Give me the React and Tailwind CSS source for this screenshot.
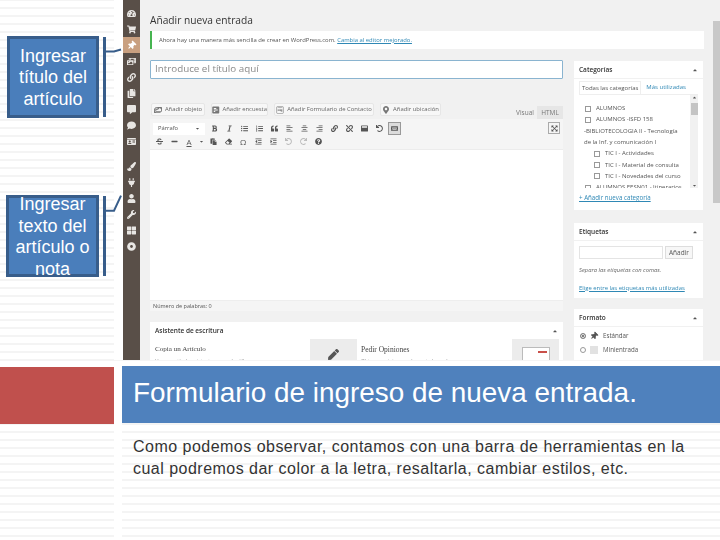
import React from "react";
import {
  FaTachometerAlt, FaShoppingCart, FaThumbtack, FaPhotoVideo, FaLink, FaCopy, FaCommentAlt, FaComment,
  FaIdCard, FaPaintBrush, FaPlug, FaUser, FaWrench, FaThLarge, FaDotCircle, FaBold, FaItalic, FaListUl,
  FaListOl, FaQuoteLeft, FaAlignLeft, FaAlignCenter, FaAlignRight, FaUnlink, FaWindowMaximize, FaUndo,
  FaKeyboard, FaStrikethrough, FaMinus, FaPaste, FaEraser, FaIndent, FaOutdent, FaRedo, FaQuestionCircle,
  FaCaretDown, FaCaretUp, FaExpandArrowsAlt, FaImages, FaPollH, FaWpforms, FaMapMarkerAlt, FaPen,
} from "react-icons/fa";

const menuTop = [FaTachometerAlt, FaShoppingCart, FaThumbtack, FaPhotoVideo, FaLink, FaCopy, FaCommentAlt, FaComment, FaIdCard];
const menuBottom = [FaPaintBrush, FaPlug, FaUser, FaWrench, FaThLarge, FaDotCircle];
const toolbarOne = [FaBold, FaItalic, FaListUl, FaListOl, FaQuoteLeft, FaAlignLeft, FaAlignCenter, FaAlignRight, FaLink, FaUnlink, FaWindowMaximize, FaUndo];
const categories = [
  { name: "ALUMNOS" },
  { name: "ALUMNOS -ISFD 158" },
  { name: "-BIBLIOTECOLOGIA II - Tecnología", plain: true },
  { name: "de la Inf. y comunicación I", plain: true },
  { name: "TIC I - Actividades", sub: true },
  { name: "TIC I - Material de consulta", sub: true },
  { name: "TIC I - Novedades del curso", sub: true },
  { name: "ALUMNOS EESN01 - Itinerarios" },
];

const Callout = ({ lines, boxClass, path, lineX }) => (
  <div className={`flex h-[82px] ${boxClass}`}>
    <div className="w-[94px] h-[82px] pt-[2px] border-[3px] border-[#385d8a] bg-[#4a7ebb] flex flex-col items-center justify-center text-white text-[18px] leading-[21.5px] text-center">
      {lines.map((line) => (
        <span key={line} className="whitespace-nowrap">{line}</span>
      ))}
    </div>
    <svg width="24" height="82" className="shrink-0 overflow-visible" fill="none" stroke="#385d8a">
      <line x1={lineX} y1="1" x2={lineX} y2="81" strokeWidth="3" />
      <path d={path} strokeWidth="2" />
    </svg>
  </div>
);

const MediaButton = ({ icon: Icon, label, width }) => (
  <div className={`h-[13px] flex items-center justify-center gap-[3px] bg-[#f7f7f7] border border-[#e6e6e6] rounded-[2px] text-[5.9px] text-[#666] whitespace-nowrap ${width}`}>
    <Icon className="text-[8px] text-[#777]" />
    {label}
  </div>
);

const SideBox = ({ title, className, children }) => (
  <div className={`bg-white ${className}`}>
    <div className="h-[18px] flex items-center justify-between px-[5px] text-[6.5px] font-semibold text-[#333] border-b border-[#f1f1f1]">
      {title}
      <FaCaretUp className="text-[6px] text-[#555]" />
    </div>
    {children}
  </div>
);

const Check = () => <span className="w-[6px] h-[6px] border border-[#999] bg-white shrink-0" />;

const Screenshot = () => (
  <div className="w-[597px] h-[360px] flex overflow-hidden font-['Open_Sans',sans-serif] bg-[#f1f1f1] blur-[0.45px]">
    <div className="w-[17px] shrink-0 bg-[#594f48] pt-[5px] flex flex-col text-[#e8e6e3]">
      {menuTop.map((Icon, i) => (
        <div key={i} className={`h-4 flex items-center justify-center text-[9px] ${i === 2 ? "bg-[#c9a080] text-white" : ""}`}>
          <Icon className={i === 2 ? "rotate-45" : ""} />
        </div>
      ))}
      <div className="h-[9px]" />
      {menuBottom.map((Icon, i) => (
        <div key={i} className="h-4 flex items-center justify-center text-[9px]">
          <Icon />
        </div>
      ))}
    </div>

    <div className="w-[573px] shrink-0 pl-[10px] pr-[9px] pt-[13px]">
      <div className="h-[14px] text-[10.2px] leading-[14px] text-[#333]">Añadir nueva entrada</div>
      <div className="mt-[4px] h-[18px] bg-white border-l-2 border-[#46b450] pl-[7px] flex items-center text-[5.9px] text-[#555] whitespace-nowrap">
        Ahora hay una manera más sencilla de crear en WordPress.com.&nbsp;
        <span className="text-[#2f88b5] underline">Cambia al editor mejorado.</span>
      </div>

      <div className="mt-[11px] flex gap-[11px]">
        <div className="w-[413px] shrink-0">
          <div className="h-[19px] bg-white border border-[#8ab4d0] rounded-[1px] pl-[4px] flex items-center text-[9.8px] text-[#8a8a8a]">
            Introduce el título aquí
          </div>

          <div className="mt-[24px] flex items-end h-[16px]">
            <div className="flex gap-[6px] pl-px pb-[3px]">
              <MediaButton icon={FaImages} label="Añadir objeto" width="w-[54px]" />
              <MediaButton icon={FaPollH} label="Añadir encuesta" width="w-[57px]" />
              <MediaButton icon={FaWpforms} label="Añadir Formulario de Contacto" width="w-[100px]" />
              <MediaButton icon={FaMapMarkerAlt} label="Añadir ubicación" width="w-[61px]" />
            </div>
            <div className="ml-auto flex text-[6.5px] text-[#777]">
              <div className="w-[24px] h-[13px] flex items-center justify-center">Visual</div>
              <div className="w-[26px] h-[13px] flex items-center justify-center bg-[#e6e6e6]">HTML</div>
            </div>
          </div>

          <div className="h-[31px] pt-[3px] bg-[#f5f5f5] border-b border-[#ececec] relative text-[#555]">
            <div className="flex items-center h-[13px] pl-[3px]">
              <div className="w-[52px] h-[12px] bg-white flex items-center justify-between px-[5px] text-[5.8px]">
                Párrafo
                <FaCaretDown className="text-[5px]" />
              </div>
              <div className="w-[1.5px]" />
              {toolbarOne.map((Icon, i) => (
                <div key={i} className="w-[15px] flex justify-center text-[7px]">
                  <Icon />
                </div>
              ))}
              <div className="w-[13px] h-[13px] ml-px flex items-center justify-center bg-[#dcdcdc] border border-[#999] text-[7px]">
                <FaKeyboard />
              </div>
            </div>
            <div className="flex items-center h-[13px] pl-[1.5px]">
              <div className="w-[15px] flex justify-center text-[7px]"><FaStrikethrough /></div>
              <div className="w-[15px] flex justify-center text-[7px]"><FaMinus /></div>
              <div className="w-[15px] flex justify-center text-[8px] underline">A</div>
              <div className="w-[9px] flex justify-center text-[5px]"><FaCaretDown /></div>
              {[FaPaste, FaEraser].map((Icon, i) => (
                <div key={i} className="w-[15px] flex justify-center text-[7px] first:ml-[2px]"><Icon /></div>
              ))}
              <div className="w-[15px] flex justify-center text-[8px] leading-none">Ω</div>
              {[FaOutdent, FaIndent].map((Icon, i) => (
                <div key={i} className="w-[15px] flex justify-center text-[7px]"><Icon /></div>
              ))}
              <div className="w-[15px] flex justify-center text-[7px] text-[#bbb]"><FaUndo /></div>
              <div className="w-[15px] flex justify-center text-[7px] text-[#bbb]"><FaRedo /></div>
              <div className="w-[15px] flex justify-center text-[7px]"><FaQuestionCircle /></div>
            </div>
            <div className="absolute right-[3px] top-[3px] w-[12px] h-[12px] border border-[#aaa] flex items-center justify-center text-[7px]">
              <FaExpandArrowsAlt />
            </div>
          </div>

          <div className="h-[151px] bg-white border-b border-[#eee]" />
          <div className="h-[10px] bg-[#f5f5f5] pl-[3px] flex items-center text-[5.5px] text-[#555]">Número de palabras: 0</div>

          <div className="mt-[11px] bg-white h-[60px]">
            <div className="h-[17px] flex items-center justify-between pl-[5px] pr-[5px] text-[6.5px] font-semibold text-[#333]">
              Asistente de escritura
              <FaCaretUp className="text-[6px] text-[#555]" />
            </div>
            <div className="flex h-[22px]">
              <div className="w-[160px] pl-[5px] pt-[5px] font-['Liberation_Serif',serif] text-[7.1px] text-[#444]">
                <div>Copia un Artículo</div>
                <div className="font-['Open_Sans',sans-serif] text-[5px] text-[#888] mt-[3px]">Usa un artículo existente como plantilla</div>
              </div>
              <div className="w-[47px] bg-[#ececec] flex justify-center pt-[10px] text-[11px] text-[#555]"><FaPen /></div>
              <div className="w-[155px] pl-[4px] pt-[5px] font-['Liberation_Serif',serif] text-[7.5px] text-[#444]">
                <div>Pedir Opiniones</div>
                <div className="font-['Open_Sans',sans-serif] text-[5px] text-[#888] mt-[3px]">Obtener opiniones sobre este borrador</div>
              </div>
              <div className="w-[47px] bg-[#ececec] flex justify-center pt-[8px]">
                <div className="w-[28px] h-[18px] bg-white border border-[#bbb] flex justify-end pt-[3px] pr-[2px]">
                  <span className="w-[9px] h-[2px] bg-[#c9504a]" />
                </div>
              </div>
            </div>
          </div>
        </div>

        <div className="w-[129px] shrink-0 mt-px">
          <SideBox title="Categorías" className="h-[149px]">
            <div className="flex items-end h-[15px] px-[5px] text-[6px]">
              <div className="h-[13px] px-[2px] flex items-center border border-b-0 border-[#eee] text-[#555]">Todas las categorías</div>
              <div className="ml-[5px] h-[13px] flex items-center text-[#2f88b5]">Más utilizadas</div>
            </div>
            <div className="mx-[5px] h-[94px] border-t border-[#eee] relative overflow-hidden pt-[8px] pl-[6px] text-[6px] text-[#555]">
              {categories.map((c) => (
                <div key={c.name} className={`h-[11.3px] flex items-center gap-[3px] whitespace-nowrap ${c.sub ? "pl-[9px]" : ""} ${c.plain ? "-ml-[1px]" : ""}`}>
                  {!c.plain && <Check />}
                  <span className={c.plain ? "" : "ml-[2px]"}>{c.name}</span>
                </div>
              ))}
              <div className="absolute right-0 top-0 w-[8px] h-full bg-[#f1f1f1] flex flex-col items-center justify-between text-[5px] text-[#555]">
                <FaCaretUp />
                <div className="absolute top-[8px] w-[7px] h-[12px] bg-[#c4c4c4]" />
                <FaCaretDown />
              </div>
            </div>
            <div className="mt-[5px] pl-[5px] text-[6.2px] text-[#2f88b5] underline">+ Añadir nueva categoría</div>
          </SideBox>

          <SideBox title="Etiquetas" className="mt-[13px] h-[75px]">
            <div className="flex px-[5px] pt-[5px] gap-[2px]">
              <div className="w-[84px] h-[13px] border border-[#e4e4e4]" />
              <div className="w-[28px] h-[13px] bg-[#f7f7f7] border border-[#ddd] flex items-center justify-center text-[6.5px] text-[#555]">Añadir</div>
            </div>
            <div className="mt-[7px] pl-[5px] text-[5.8px] italic text-[#666]">Separa las etiquetas con comas.</div>
            <div className="mt-[9px] pl-[5px] text-[5.9px] text-[#2f88b5] underline whitespace-nowrap">Elige entre las etiquetas más utilizadas</div>
          </SideBox>

          <SideBox title="Formato" className="mt-[11px] h-[60px]">
            <div className="pl-[6px] pt-[2px] text-[6.2px] text-[#555]">
              <div className="h-[14px] flex items-center gap-[4px]">
                <span className="w-[6px] h-[6px] rounded-full border border-[#888] bg-[#555] shadow-[inset_0_0_0_1px_#fff]" />
                <FaThumbtack className="text-[8px] mr-px rotate-45" />
                Estándar
              </div>
              <div className="h-[14px] flex items-center gap-[4px]">
                <span className="w-[6px] h-[6px] rounded-full border border-[#999]" />
                <span className="w-[8px] h-[8px] bg-[#e2e2e2] mr-px" />
                Minientrada
              </div>
            </div>
          </SideBox>
        </div>
      </div>
    </div>

    <div className="w-[7px] shrink-0 bg-[#f1f1f1] pt-[21px]">
      <div className="h-[182px] bg-[#c8c8c8]" />
    </div>
  </div>
);

export default function App() {
  return (
    <div className="w-[720px] h-[540px] overflow-hidden font-['Liberation_Sans',sans-serif] bg-white bg-[repeating-linear-gradient(to_bottom,#f4f4f4_0,#f4f4f4_1px,#fff_1px,#fff_7px,#f4f4f4_7px,#f4f4f4_8px)]">
      <div className="flex h-[360px]">
        <div className="w-[123px] shrink-0 relative z-10 bg-[linear-gradient(to_right,transparent_114px,#fff_114px)]">
          <Callout
            lines={["Ingresar", "título del", "artículo"]}
            boxClass="mt-[36px] ml-[7px]"
            lineX="5.5"
            path="M7 15.5 H15 L22 13.5"
          />
          <Callout
            lines={["Ingresar", "texto del", "artículo o", "nota"]}
            boxClass="mt-[77px] ml-[6px]"
            lineX="5.5"
            path="M7 15.7 H15 L22 0.7"
          />
        </div>
        <Screenshot />
      </div>

      <div className="mt-[6px] flex">
        <div className="w-[114px] h-[57px] mt-px bg-[#c0504d] shrink-0" />
        <div className="w-[8px] shrink-0 bg-white" />
        <div className="w-[598px] h-[57px] bg-[#4f81bd] pl-[11px] pb-[3px] flex items-center text-[27.9px] text-white whitespace-nowrap">
          Formulario de ingreso de nueva entrada.
        </div>
      </div>

      <div className="flex h-[116px]">
        <div className="w-[114px] shrink-0" />
        <div className="w-[8px] shrink-0 bg-white" />
        <div className="pl-[11px] pt-[12px] text-[16px] leading-[22px] tracking-[0.48px] text-[#333] whitespace-pre-line">
          {"Como podemos observar, contamos con una barra de herramientas en la\ncual podremos dar color a la letra, resaltarla, cambiar estilos, etc."}
        </div>
      </div>
    </div>
  );
}
